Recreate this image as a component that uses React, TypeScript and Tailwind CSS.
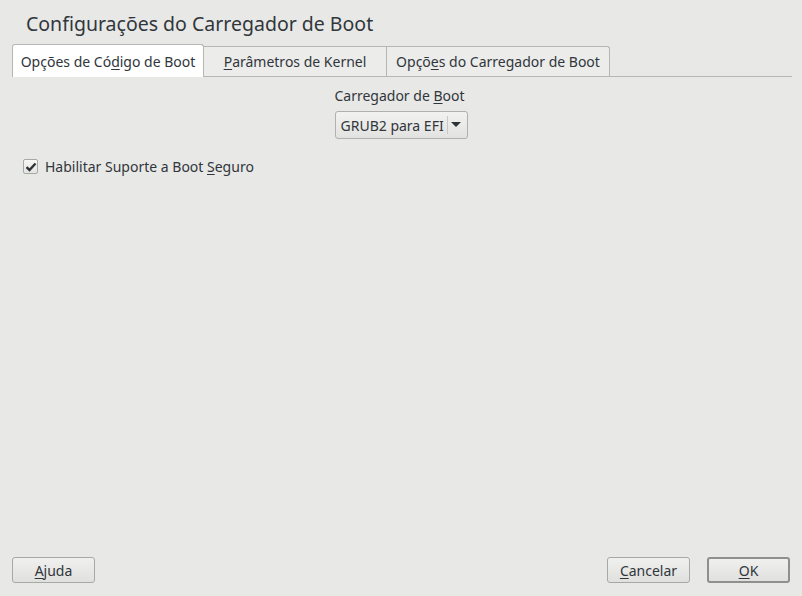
export default function App() {
  const font = { fontFamily: '"Noto Sans", "Open Sans", sans-serif' };
  return (
    <div
      className="w-[802px] h-[596px] bg-[#e8e8e7] text-[#31363b] flex flex-col text-[14px]"
      style={font}
    >
      <h1 className="pl-[26px] pt-[10px] h-[44px] text-[19.5px] leading-[28px]">
        Configurações do Carregador de Boot
      </h1>

      {/* tabs */}
      <div className="flex items-end mx-[12px] mr-[10px] border-b border-[#b6b6b3] h-[33px]">
        <div className="h-[33px] w-[192px] bg-white border border-b-0 border-[#b6b6b3] rounded-t-[3px] flex items-center justify-center -mb-px">
          <span>
            Opções de Có<u className="underline-offset-2">d</u>igo de Boot
          </span>
        </div>
        <div className="h-[30px] w-[183px] bg-[#ececeb] border border-l-0 border-b-0 border-[#b6b6b3] flex items-center justify-center">
          <span>
            <u className="underline-offset-2">P</u>arâmetros de Kernel
          </span>
        </div>
        <div className="h-[30px] w-[223px] bg-[#ececeb] border border-l-0 border-b-0 border-[#b6b6b3] rounded-tr-[3px] flex items-center justify-center">
          <span>
            Opçõ<u className="underline-offset-2">e</u>s do Carregador de Boot
          </span>
        </div>
      </div>

      {/* content */}
      <div className="flex-1 flex flex-col">
        <div className="flex flex-col items-center pt-[9px]">
          <div className="leading-[20px] -ml-[3px]">
            Carregador de <u className="underline-offset-2">B</u>oot
          </div>
          <div className="mt-[5px] h-[28px] w-[133px] border border-[#b0b0ad] rounded-[3px] bg-gradient-to-b from-[#f2f2f1] to-[#e2e2e0] flex items-center pl-[5px] pr-[6px]">
            <span className="flex-1 whitespace-nowrap overflow-hidden">GRUB2 para EFI</span>
            <span className="w-px h-[18px] bg-[#c8c8c6] mr-[3px]" />
            <svg width="10" height="6" viewBox="0 0 10 6">
              <path d="M0 0 L10 0 L5 5 Z" fill="#2e3436" />
            </svg>
          </div>
        </div>

        <label className="flex items-center ml-[23px] mt-[17px] gap-[7px]">
          <span className="w-[15px] h-[15px] border border-[#a8a8a5] rounded-[2px] bg-gradient-to-b from-[#f7f7f6] to-[#e4e4e2] flex items-center justify-center">
            <svg width="12" height="10" viewBox="0 0 12 10">
              <path d="M1.5 5.2 L4.5 8 L10.5 1.5" fill="none" stroke="#2e3436" strokeWidth="2.4" />
            </svg>
          </span>
          <span>
            Habilitar Suporte a Boot <u className="underline-offset-2">S</u>eguro
          </span>
        </label>
      </div>

      {/* buttons */}
      <div className="flex items-center px-[12px] pb-[13px]">
        <button className="h-[26px] w-[83px] border border-[#a8a8a5] rounded-[3px] bg-gradient-to-b from-[#f0f0ef] to-[#e0e0de]">
          <u className="underline-offset-2">A</u>juda
        </button>
        <div className="flex-1" />
        <button className="h-[26px] w-[83px] border border-[#a8a8a5] rounded-[3px] bg-gradient-to-b from-[#f0f0ef] to-[#e0e0de]">
          <u className="underline-offset-2">C</u>ancelar
        </button>
        <button className="ml-[17px] h-[26px] w-[83px] border-2 border-[#8f8f8c] rounded-[3px] bg-gradient-to-b from-[#f0f0ef] to-[#e0e0de]">
          <u className="underline-offset-2">O</u>K
        </button>
      </div>
    </div>
  );
}
